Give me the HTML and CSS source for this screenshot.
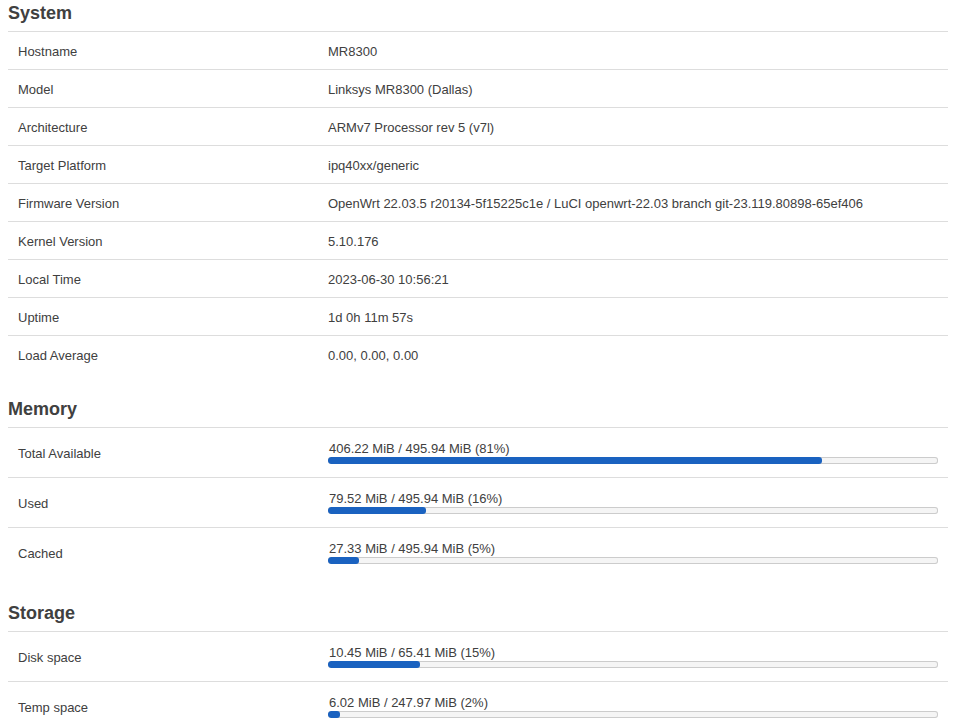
FILE: index.html
```html
<!DOCTYPE html>
<html>
<head>
<meta charset="utf-8">
<title>Status</title>
<link rel="stylesheet" href="styles.css">
</head>
<body>
<div class="section">
  <h3>System</h3>
  <div class="table">
    <div class="row"><div class="label">Hostname</div><div class="value">MR8300</div></div>
    <div class="row"><div class="label">Model</div><div class="value">Linksys MR8300 (Dallas)</div></div>
    <div class="row"><div class="label">Architecture</div><div class="value">ARMv7 Processor rev 5 (v7l)</div></div>
    <div class="row"><div class="label">Target Platform</div><div class="value">ipq40xx/generic</div></div>
    <div class="row"><div class="label">Firmware Version</div><div class="value">OpenWrt 22.03.5 r20134-5f15225c1e / LuCI openwrt-22.03 branch git-23.119.80898-65ef406</div></div>
    <div class="row"><div class="label">Kernel Version</div><div class="value">5.10.176</div></div>
    <div class="row"><div class="label">Local Time</div><div class="value">2023-06-30 10:56:21</div></div>
    <div class="row"><div class="label">Uptime</div><div class="value">1d 0h 11m 57s</div></div>
    <div class="row"><div class="label">Load Average</div><div class="value">0.00, 0.00, 0.00</div></div>
  </div>
</div>
<div class="section">
  <h3>Memory</h3>
  <div class="table">
    <div class="row tall"><div class="label">Total Available</div><div class="value"><div class="meter"><span class="meter-text">406.22 MiB / 495.94 MiB (81%)</span><div class="bar"><div class="fill" style="width:81%"></div></div></div></div></div>
    <div class="row tall"><div class="label">Used</div><div class="value"><div class="meter"><span class="meter-text">79.52 MiB / 495.94 MiB (16%)</span><div class="bar"><div class="fill" style="width:16%"></div></div></div></div></div>
    <div class="row tall"><div class="label">Cached</div><div class="value"><div class="meter"><span class="meter-text">27.33 MiB / 495.94 MiB (5%)</span><div class="bar"><div class="fill" style="width:5%"></div></div></div></div></div>
  </div>
</div>
<div class="section">
  <h3>Storage</h3>
  <div class="table">
    <div class="row tall"><div class="label">Disk space</div><div class="value"><div class="meter"><span class="meter-text">10.45 MiB / 65.41 MiB (15%)</span><div class="bar"><div class="fill" style="width:15%"></div></div></div></div></div>
    <div class="row tall"><div class="label">Temp space</div><div class="value"><div class="meter"><span class="meter-text">6.02 MiB / 247.97 MiB (2%)</span><div class="bar"><div class="fill" style="width:2%"></div></div></div></div></div>
  </div>
</div>
</body>
</html>
```
FILE: styles.css
```css
html, body {
  margin: 0;
  background: #fff;
}
body {
  padding: 0 15px 0 8px;
  font-family: "Liberation Sans", Arial, sans-serif;
  font-size: 13px;
  color: #404040;
}
.section + .section {
  margin-top: 23px;
}
h3 {
  margin: 0 0 7px 0;
  padding-top: 2px;
  font-size: 18px;
  line-height: 22px;
  font-weight: bold;
  color: #404040;
}
.row {
  display: grid;
  grid-template-columns: 320px 1fr;
  box-sizing: border-box;
  height: 38px;
  border-top: 1px solid #ddd;
  align-items: center;
}
.row.tall {
  height: 50px;
}
.label {
  padding-left: 10px;
  padding-top: 2px;
  line-height: 16px;
}
.value {
  padding-right: 10px;
  padding-top: 2px;
  line-height: 16px;
}
.meter {
  display: flex;
  flex-direction: column;
  padding-bottom: 1px;
  margin-top: -2px;
}
.meter-text {
  line-height: 17px;
  padding-left: 1px;
}
.bar {
  height: 7px;
  background: #f5f5f5;
  box-shadow: inset 0 0 0 1px #ccc;
  border-radius: 3px;
  overflow: hidden;
}
.fill {
  height: 100%;
  background: #1a62c0;
  border-radius: 3px;
}
```
